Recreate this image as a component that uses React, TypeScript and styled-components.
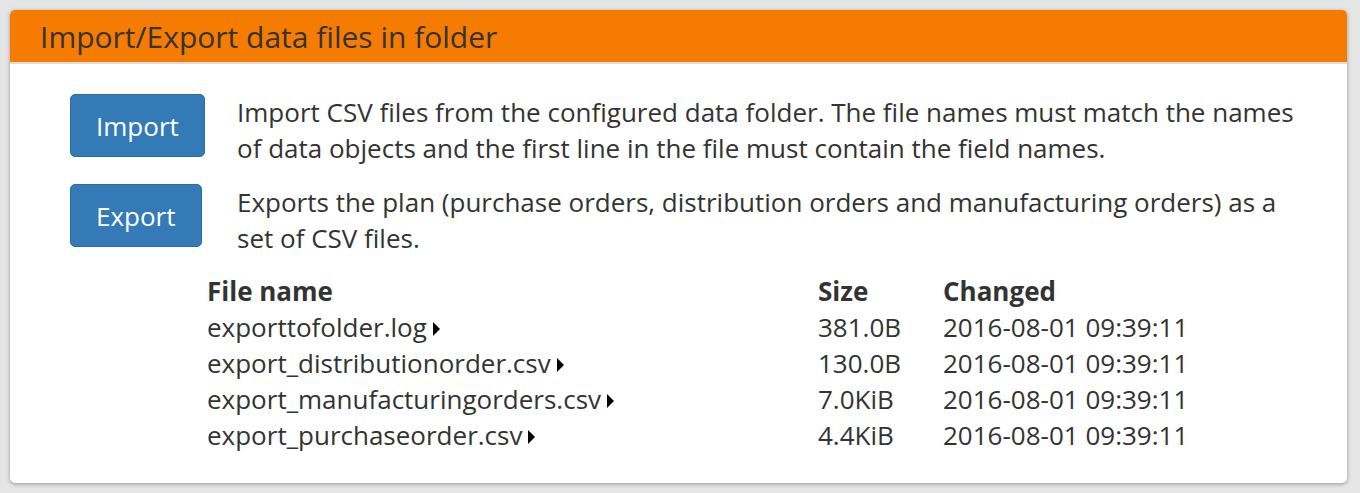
import React from 'react';
import styled, { createGlobalStyle } from 'styled-components';

const GlobalStyle = createGlobalStyle`
  body {
    margin: 0;
    background: #e6e6e6;
    font-family: "Open Sans", "Liberation Sans", sans-serif;
    color: #333;
  }
`;

// styles
const Panel = styled.div`
  margin: 10px 13px 9px 10px;
  background: #fff;
  border-radius: 5px;
  box-shadow: 0 1px 4px rgba(0, 0, 0, 0.35);
  overflow: hidden;
`;

const PanelHeader = styled.div`
  background: #f57c00;
  border-bottom: 2px solid #ddd;
  height: 52px;
  padding: 0 30px;
  display: flex;
  align-items: center;
  font-size: 30px;
  color: #333;
`;

const PanelBody = styled.div`
  padding: 30px 40px 30px 60px;
  display: flex;
  flex-direction: column;
  gap: 18px;
`;

const ActionRow = styled.div`
  display: grid;
  grid-template-columns: 167px 1fr;
  align-items: start;
`;

const ActionButton = styled.button`
  justify-self: start;
  height: 63px;
  padding: 0 25px;
  background: #337ab7;
  border: 1px solid #2e6da4;
  border-radius: 5px;
  color: #fff;
  font-family: inherit;
  font-size: 26px;
  cursor: pointer;
`;

const Description = styled.p`
  margin: 0;
  font-size: 26px;
  line-height: 36px;
`;

const FileTable = styled.table`
  margin: -1px 0 0 137px;
  border-collapse: collapse;
  font-size: 26px;
  line-height: 36px;
`;

const HeadCell = styled.th<{ $width?: number }>`
  text-align: left;
  font-weight: 700;
  padding: 0;
  width: ${(p) => (p.$width ? `${p.$width}px` : 'auto')};
`;

const Cell = styled.td`
  padding: 0;
  white-space: nowrap;
`;

const Caret = styled.span`
  display: inline-block;
  margin-left: 6px;
  width: 0;
  height: 0;
  border-top: 7px solid transparent;
  border-bottom: 7px solid transparent;
  border-left: 7px solid #000;
  vertical-align: 1px;
`;

const files = [
    { name: 'exporttofolder.log', size: '381.0B', changed: '2016-08-01 09:39:11' },
    { name: 'export_distributionorder.csv', size: '130.0B', changed: '2016-08-01 09:39:11' },
    { name: 'export_manufacturingorders.csv', size: '7.0KiB', changed: '2016-08-01 09:39:11' },
    { name: 'export_purchaseorder.csv', size: '4.4KiB', changed: '2016-08-01 09:39:11' },
];

const App: React.FC = () => (
    <>
        <GlobalStyle />
        <Panel>
            <PanelHeader>Import/Export data files in folder</PanelHeader>
            <PanelBody>
                <ActionRow>
                    <ActionButton>Import</ActionButton>
                    <Description>
                        Import CSV files from the configured data folder. The file names must match the names
                        of data objects and the first line in the file must contain the field names.
                    </Description>
                </ActionRow>
                <ActionRow>
                    <ActionButton>Export</ActionButton>
                    <Description>
                        Exports the plan (purchase orders, distribution orders and manufacturing orders) as a
                        set of CSV files.
                    </Description>
                </ActionRow>
                <FileTable>
                    <thead>
                        <tr>
                            <HeadCell $width={611}>File name</HeadCell>
                            <HeadCell $width={125}>Size</HeadCell>
                            <HeadCell>Changed</HeadCell>
                        </tr>
                    </thead>
                    <tbody>
                        {files.map((f) => (
                            <tr key={f.name}>
                                <Cell>
                                    {f.name}
                                    <Caret />
                                </Cell>
                                <Cell>{f.size}</Cell>
                                <Cell>{f.changed}</Cell>
                            </tr>
                        ))}
                    </tbody>
                </FileTable>
            </PanelBody>
        </Panel>
    </>
);

export default App;
